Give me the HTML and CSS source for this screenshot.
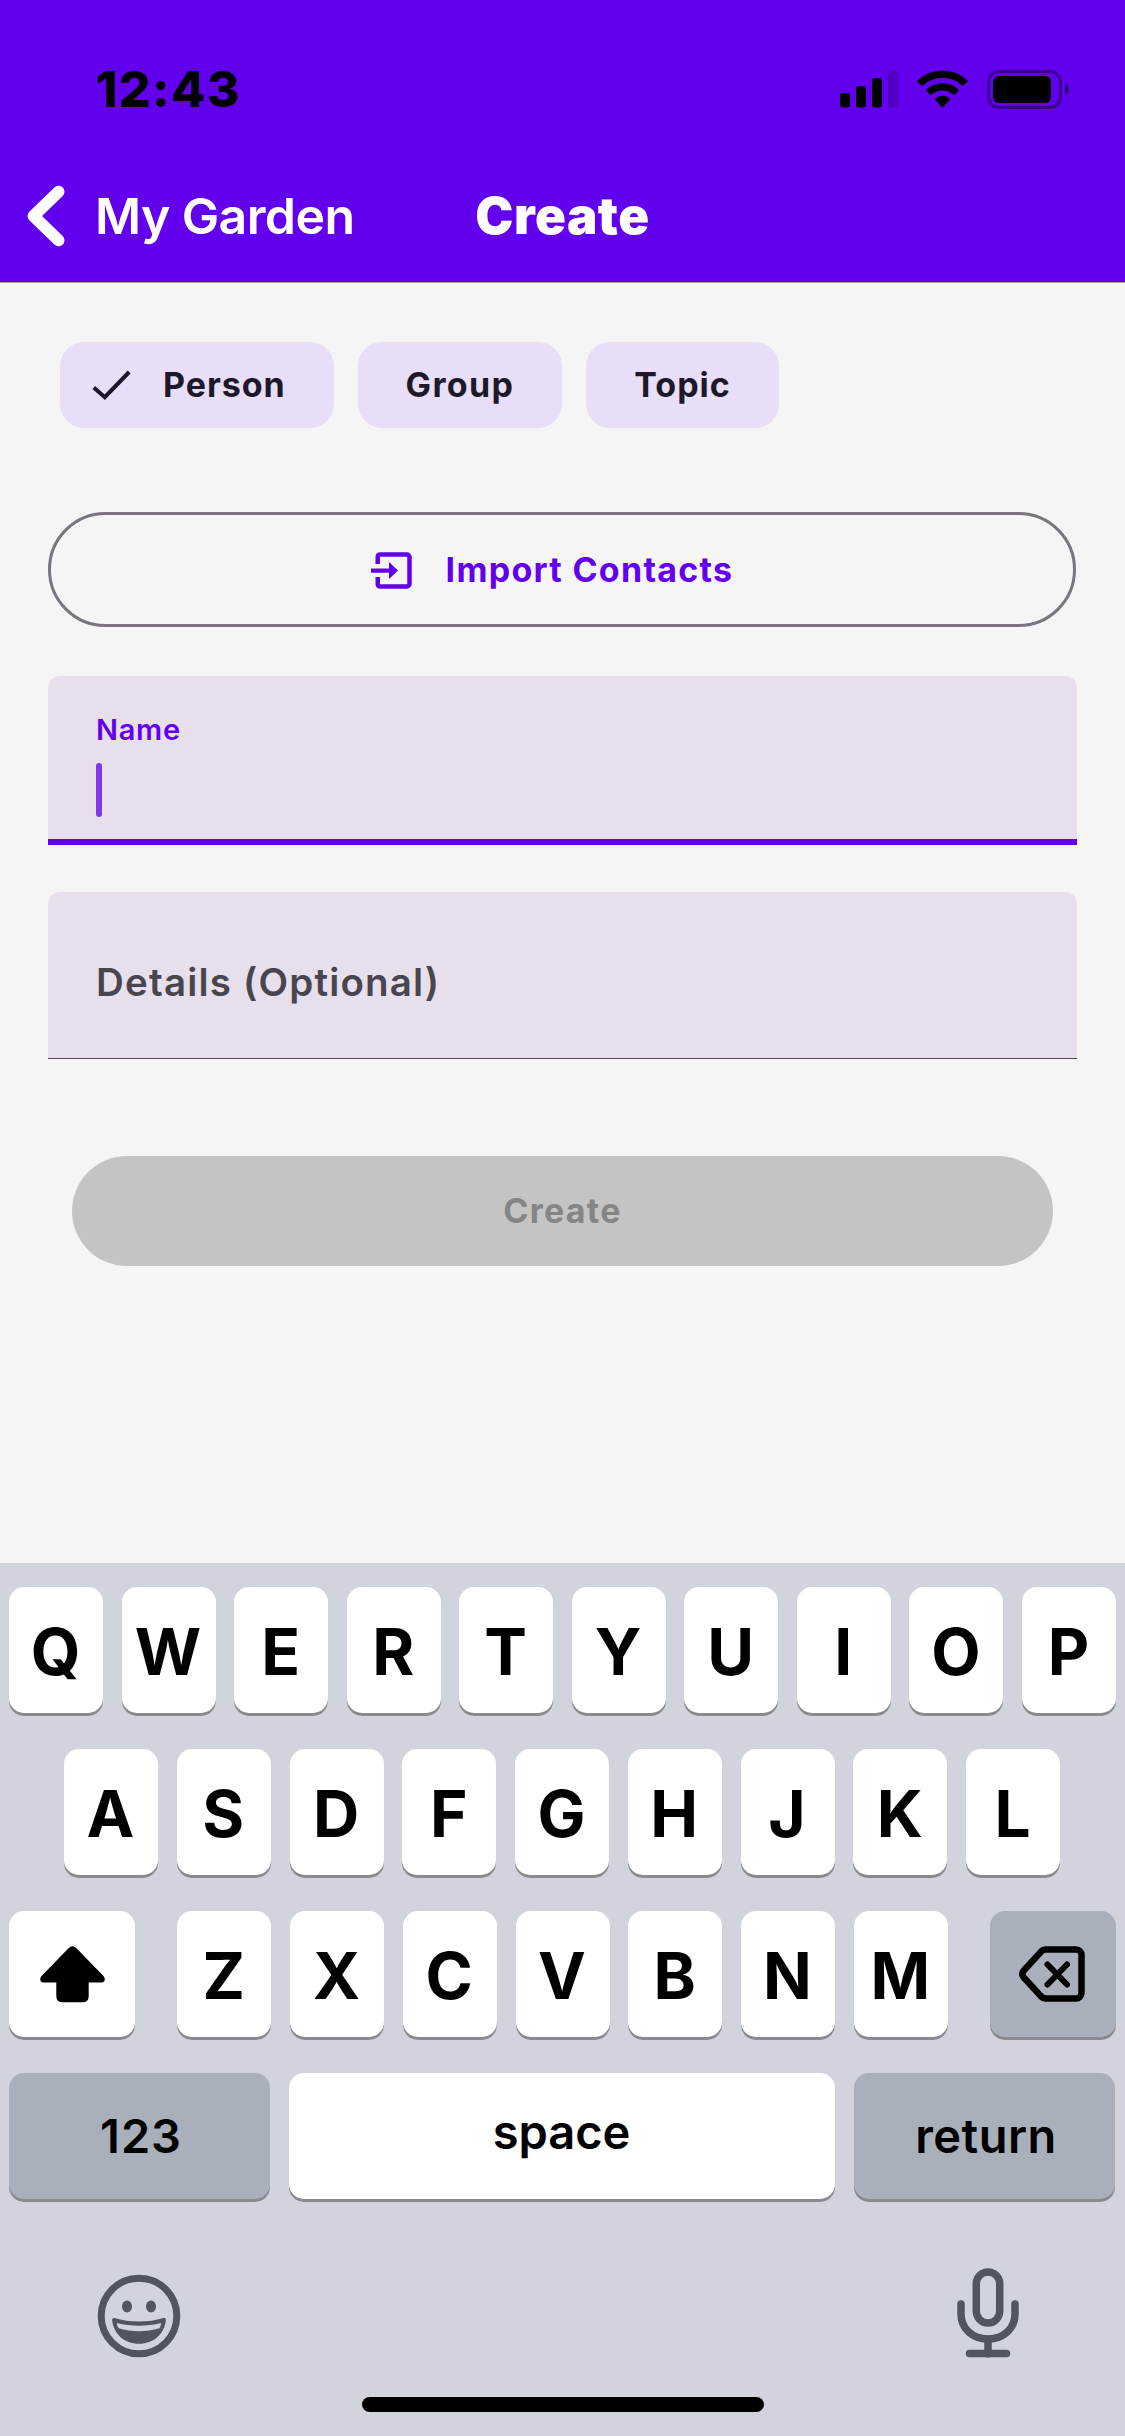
FILE: index.html
```html
<!DOCTYPE html>
<html lang="en">
<head>
<meta charset="utf-8">
<title>Create</title>
<link rel="stylesheet" href="styles.css">
</head>
<body>
<div class="screen">
  <header class="header">
    <div class="status">
      <span class="time">12:43</span>
      <div class="status-icons">
        <svg class="signal" viewBox="0 0 58 38">
          <rect x="0" y="23" width="10" height="14.5" rx="3"/>
          <rect x="16" y="16" width="10" height="21.5" rx="3"/>
          <rect x="32" y="8" width="10" height="29.5" rx="3"/>
          <rect x="48" y="0.5" width="10" height="37" rx="3" opacity=".2"/>
        </svg>
        <svg class="wifi" viewBox="0 0 51 38">
          <path d="M25.500 0.500A36 36 0 0 1 50.500 10.500Q51 11.300 50.400 12L46.500 15.600Q45.800 16 45.200 15.500A29 29 0 0 0 5.800 15.500Q5.200 16 4.500 15.600L0.600 12Q0 11.300 0.500 10.500A36 36 0 0 1 25.500 0.500Z"/>
          <path d="M25.500 13.200A23.500 23.500 0 0 1 41.500 19.600Q42.200 20.300 41.500 21L37.600 24.800Q37 25.300 36.300 24.700A16 16 0 0 0 14.700 24.700Q14 25.300 13.400 24.800L9.500 21Q8.800 20.300 9.500 19.600A23.500 23.500 0 0 1 25.500 13.200Z"/>
          <path d="M25.500 25.800C28.300 25.800 30.800 26.900 32.600 28.600Q33.100 29.300 32.500 30L26.200 37.200Q25.500 37.800 24.800 37.200L18.500 30Q17.900 29.300 18.400 28.600C20.200 26.900 22.700 25.800 25.500 25.800Z"/>
        </svg>
        <svg class="battery" viewBox="0 0 83 39">
          <rect x="1.500" y="1.500" width="72" height="36" rx="10.500" fill="none" stroke="#000" stroke-width="3" opacity=".4"/>
          <rect x="6" y="6" width="58" height="27" rx="6"/>
          <path d="M78 13.500C80.700 14.500 82 17 82 19.500S80.700 24.500 78 25.500Z" opacity=".5"/>
        </svg>
      </div>
    </div>
    <nav class="nav">
      <a class="back">
        <svg class="chevron" viewBox="0 0 38 62"><path d="M31.500 6.700L6.500 31L31.500 55.300"/></svg>
        <span class="back-label">My Garden</span>
      </a>
      <h1 class="title">Create</h1>
    </nav>
  </header>

  <main class="form">
    <div class="chips">
      <button class="chip chip-selected">
        <svg class="check" viewBox="0 0 40 30"><path d="M1.800 17.500L12.800 27.200L37.200 2"/></svg>
        <span>Person</span>
      </button>
      <button class="chip chip-group"><span>Group</span></button>
      <button class="chip"><span>Topic</span></button>
    </div>
    <button class="import">
      <svg class="import-icon" viewBox="0 0 41 37">
        <path fill="none" stroke="currentColor" stroke-width="4.500" d="M6.750 12V5A2.400 2.400 0 0 1 9 2.600H36A2.500 2.500 0 0 1 38.500 5V32A2.500 2.500 0 0 1 36 34.400H9A2.400 2.400 0 0 1 6.750 32V25"/>
        <path fill="currentColor" d="M0 16.400H18V10L27 18.500L18 27V20.800H0Z"/>
      </svg>
      <span>Import Contacts</span>
    </button>
    <div class="field field-focused">
      <span class="field-label">Name</span>
      <span class="caret"></span>
    </div>
    <div class="field field-empty">
      <span class="placeholder">Details (Optional)</span>
    </div>
    <button class="submit">Create</button>
  </main>

  <section class="keyboard">
    <div class="row">
      <span class="key">Q</span><span class="key">W</span><span class="key">E</span><span class="key">R</span><span class="key">T</span><span class="key">Y</span><span class="key">U</span><span class="key">I</span><span class="key">O</span><span class="key">P</span>
    </div>
    <div class="row row-home">
      <span class="key">A</span><span class="key">S</span><span class="key">D</span><span class="key">F</span><span class="key">G</span><span class="key">H</span><span class="key">J</span><span class="key">K</span><span class="key">L</span>
    </div>
    <div class="row">
      <span class="key key-wide">
        <svg class="shift" viewBox="0 0 65 57"><path d="M29 1.800Q32.500 -1.200 36 1.800L63.500 30Q65.500 32.500 64.500 34.700Q63.500 36.600 61 36.600H48.700V50Q48.700 56.300 42.500 56.300H22.500Q16.300 56.300 16.300 50V36.600H4Q1.500 36.600 0.500 34.700Q-0.500 32.500 1.500 30Z"/></svg>
      </span>
      <div class="row row-letters">
        <span class="key">Z</span><span class="key">X</span><span class="key">C</span><span class="key">V</span><span class="key">B</span><span class="key">N</span><span class="key">M</span>
      </div>
      <span class="key key-wide key-delete key-dark">
        <svg class="delete" viewBox="0 0 66 56"><path stroke-width="6.500" d="M27 3.500H57A5.500 5.500 0 0 1 62.500 9V47A5.500 5.500 0 0 1 57 52.500H27Q24 52.500 22 50.300L4.800 31.500Q1.800 28 4.800 24.500L22 5.700Q24 3.500 27 3.500Z"/><path stroke-width="6" d="M28.500 18.500L48 38.500M48 18.500L28.500 38.500"/></svg>
      </span>
    </div>
    <div class="row row-bottom">
      <span class="key key-word key-side key-dark">123</span>
      <span class="key key-word key-space">space</span>
      <span class="key key-word key-side key-return key-dark">return</span>
    </div>
    <div class="tools">
      <svg class="emoji" viewBox="0 0 84 84">
        <circle cx="42" cy="42" r="37.800" fill="none" stroke="#50555f" stroke-width="7"/>
        <ellipse cx="30" cy="32.500" rx="5" ry="6"/>
        <ellipse cx="54" cy="32.500" rx="5" ry="6"/>
        <path d="M17.500 44C33 48.800 51 48.800 66.500 44Q69 43.500 68.900 46C67.500 60 56.500 69.800 42 69.800S16.500 60 15.100 46Q15 43.500 17.500 44Z"/>
        <path class="teeth" d="M19.800 49C34 52.700 50 52.700 64.200 49Q64 52 62.300 54.300C49 58.200 35 58.200 21.700 54.300Q20 52 19.800 49Z"/>
      </svg>
      <svg class="mic" viewBox="0 0 62 90">
        <rect x="19.300" y="4" width="23.400" height="51" rx="11.700"/>
        <path d="M4 36V46C4 60 15 71 31 71S58 60 58 46V36M31 71V86M12.500 85.500H49.500"/>
      </svg>
    </div>
    <div class="home-indicator"></div>
  </section>
</div>
</body>
</html>
```
FILE: styles.css
```css
* { box-sizing: border-box; }

body {
  margin: 0;
  font-family: Inter, "Liberation Sans", sans-serif;
  background: #f5f5f5;
}

button {
  margin: 0;
  padding: 0;
  border: 0;
  font: inherit;
  color: inherit;
}

svg { display: block; flex: none; }

.screen {
  width: 1125px;
  height: 2436px;
  display: flex;
  flex-direction: column;
  overflow: hidden;
}

/* Header */
.header {
  flex: none;
  height: 283px;
  background: #6200ee;
  border-bottom: 1px solid #a3a3ab;
}

.status {
  height: 178px;
  padding: 0 55px 0 95.500px;
  display: flex;
  align-items: center;
  justify-content: space-between;
}

.time {
  font-size: 50px;
  font-weight: 800;
  line-height: 60px;
  letter-spacing: 1.300px;
}

.status-icons { display: flex; align-items: center; }
.signal { width: 58px; height: 38px; margin-right: 19px; }
.wifi { width: 51px; height: 38px; margin-right: 19px; }
.battery { width: 83px; height: 39px; }

.nav {
  height: 76px;
  display: grid;
  grid-template-columns: 1fr auto 1fr;
  align-items: center;
  color: #fff;
}

.back {
  display: flex;
  align-items: center;
  gap: 30px;
  padding-left: 27px;
}

.chevron { width: 38px; height: 62px; }
.chevron path {
  fill: none;
  stroke: #fff;
  stroke-width: 12;
  stroke-linecap: round;
  stroke-linejoin: round;
}

.back-label {
  font-size: 50px;
  font-weight: 580;
  line-height: 60px;
  letter-spacing: -0.600px;
  white-space: nowrap;
}

.title {
  margin: 0;
  font-size: 51px;
  font-weight: 900;
  line-height: 60px;
  letter-spacing: 0.500px;
}

/* Form */
.form {
  flex: none;
  height: 1280px;
  padding: 59px 48px 0;
  display: flex;
  flex-direction: column;
  background: #f5f5f5;
}

.chips { display: flex; gap: 24px; padding-left: 12px; }

.chip {
  height: 86px;
  padding: 0 48px 2px;
  display: flex;
  align-items: center;
  border-radius: 24px;
  background: #e8def8;
  color: #1d192b;
  font-size: 34px;
  font-weight: 700;
  letter-spacing: 0.950px;
}

.chip-selected { padding-left: 32px; }
.chip-group { letter-spacing: 1.350px; }
.check { width: 40px; height: 30px; margin: 2px 31px 0 0; }
.check path { fill: none; stroke: #1d192b; stroke-width: 4; }

.import {
  width: 1028px;
  height: 115px;
  margin-top: 84px;
  padding-right: 20px;
  display: flex;
  align-items: center;
  justify-content: center;
  gap: 34px;
  border: 3px solid #79747e;
  border-radius: 58px;
  background: none;
  color: #6200ee;
  font-size: 34px;
  font-weight: 700;
  letter-spacing: 1.280px;
}

.import-icon { width: 41px; height: 37px; margin-top: 2px; }

.field {
  padding: 0 48px;
  border-radius: 12px 12px 0 0;
  background: #e7dfec;
}

/* The active line is an inset shadow so its ends stay square. */
.field-focused {
  height: 169px;
  margin-top: 49px;
  padding-top: 36px;
  box-shadow: inset 0 -6px 0 #6200ee;
}

.field-label {
  display: block;
  color: #6200ee;
  font-size: 29px;
  font-weight: 580;
  line-height: 36px;
  letter-spacing: 0.700px;
}

.caret {
  display: block;
  width: 6px;
  height: 54px;
  margin-top: 15px;
  border-radius: 3px;
  background: #8136ec;
}

.field-empty {
  height: 167px;
  margin-top: 47px;
  padding-top: 66px;
  border-bottom: 1px solid #49454f;
}

.placeholder {
  display: block;
  color: #49454f;
  font-size: 38.500px;
  font-weight: 580;
  line-height: 48px;
  letter-spacing: 1.180px;
}

.submit {
  height: 110px;
  margin: 97px 24px 0;
  padding-bottom: 2px;
  border-radius: 55px;
  background: #c4c4c4;
  color: #858585;
  font-size: 34px;
  font-weight: 700;
  letter-spacing: 1.280px;
}

/* Keyboard */
.keyboard {
  flex: 1;
  padding: 24px 9px 0;
  display: flex;
  flex-direction: column;
  gap: 36px;
  background: #d1d4dd;
}

.row { display: flex; justify-content: space-between; }
.row-home { padding: 0 56px 0 55px; }
.row-letters { width: 770.500px; }
.row-bottom { padding-right: 1px; }

.key {
  width: 94px;
  height: 126px;
  display: flex;
  align-items: center;
  justify-content: center;
  border-radius: 15px;
  background: #fff;
  box-shadow: 0 3px 0 #898a8d;
  font-size: 64px;
  font-weight: 700;
  line-height: 80px;
  padding: 3px 1px 0 0;
}

.key-wide { width: 126px; padding: 0; }
.key-delete { padding-right: 2px; }
.key-dark { background: #a9afbb; }
.key-word { font-size: 47px; font-weight: 580; }
.key-side { width: 261px; padding: 0 0 1px 3px; letter-spacing: 0.900px; }
.key-return { letter-spacing: 0.500px; }
.key-space { width: 546.500px; padding: 0 1px 8px 0; letter-spacing: -0.100px; }

.shift { width: 65px; height: 57px; }
.delete { width: 66px; height: 56px; }
.delete path {
  fill: none;
  stroke: #000;
  stroke-linecap: round;
  stroke-linejoin: round;
}

.tools {
  padding: 33px 97px 0 87.500px;
  display: flex;
  align-items: flex-end;
  justify-content: space-between;
}

.emoji { width: 84px; height: 84px; fill: #50555f; }
.emoji .teeth { fill: #d1d4dd; }
.mic {
  width: 62px;
  height: 90px;
  fill: none;
  stroke: #50555f;
  stroke-width: 7.500;
  stroke-linecap: round;
}

.home-indicator {
  width: 402px;
  height: 15px;
  margin: 3px auto 0;
  border-radius: 8px;
  background: #000;
}
```
